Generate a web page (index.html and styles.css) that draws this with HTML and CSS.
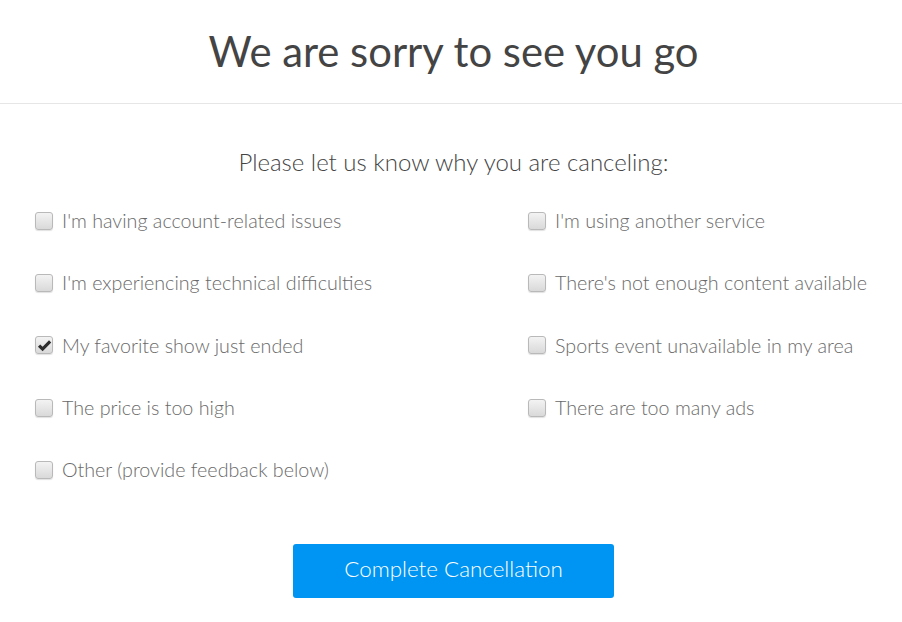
FILE: index.html
```html
<!DOCTYPE html>
<html>
<head>
<meta charset="utf-8">
<link rel="stylesheet" href="styles.css">
</head>
<body>
<div class="header"><h1 class="title">We are sorry to see you go</h1></div>
<div class="content">
  <p class="subtitle">Please let us know why you are canceling:</p>
  <div class="options">
    <label class="option"><span class="box"></span><span class="text">I'm having account-related issues</span></label>
    <label class="option"><span class="box"></span><span class="text">I'm using another service</span></label>
    <label class="option"><span class="box"></span><span class="text">I'm experiencing technical difficulties</span></label>
    <label class="option"><span class="box"></span><span class="text">There's not enough content available</span></label>
    <label class="option"><span class="box checked"><svg viewBox="0 0 16 16" width="15" height="15"><path d="M1 9.2 L3.4 6.8 L6 9.4 L12.8 2.4 L15.2 4.8 L6 14.2 Z" fill="#2d2d2d"/></svg></span><span class="text">My favorite show just ended</span></label>
    <label class="option"><span class="box"></span><span class="text">Sports event unavailable in my area</span></label>
    <label class="option"><span class="box"></span><span class="text">The price is too high</span></label>
    <label class="option"><span class="box"></span><span class="text">There are too many ads</span></label>
    <label class="option"><span class="box"></span><span class="text">Other (provide feedback below)</span></label>
  </div>
  <div class="actions"><button class="btn">Complete Cancellation</button></div>
</div>
</body>
</html>
```
FILE: styles.css
```css
html, body {
  margin: 0;
  padding: 0;
  background: #fff;
  font-family: Lato, "Open Sans", sans-serif;
}
.header {
  height: 103px;
  border-bottom: 1px solid #e6e6e6;
  display: flex;
  align-items: center;
  justify-content: center;
  padding-left: 5px;
}
.title {
  margin: 0;
  font-size: 41.8px;
  font-weight: 400;
  color: #444;
  line-height: 1.2;
}
.content {
  padding-top: 44px;
  padding-left: 5px;
}
.subtitle {
  margin: 0;
  text-align: center;
  font-size: 24px;
  font-weight: 300;
  color: #444;
  line-height: 1.2;
}
.options {
  display: grid;
  grid-template-columns: 493px 1fr;
  grid-auto-rows: 62.3px;
  padding-left: 30px;
  margin-top: 31px;
}
.option {
  display: flex;
  align-items: center;
  gap: 9px;
  height: 26px;
}
.box {
  width: 16px;
  height: 16px;
  border: 1px solid #b9b9b9;
  border-radius: 3px;
  background: linear-gradient(#f3f3f3, #d9d9d9);
  box-shadow: 0 1px 1px rgba(0,0,0,0.12);
  display: flex;
  align-items: center;
  justify-content: center;
  flex: none;
}
.text {
  font-size: 19.7px;
  font-weight: 300;
  color: #6a6a6a;
  line-height: 1.2;
}
.actions {
  display: flex;
  justify-content: center;
  margin-top: 25px;
}
.btn {
  width: 321px;
  height: 54px;
  border: none;
  border-radius: 3px;
  background: #0095f2;
  color: #fff;
  font-family: Lato, sans-serif;
  font-weight: 300;
  font-size: 22.4px;
  padding: 0 0 5px;
}
```
